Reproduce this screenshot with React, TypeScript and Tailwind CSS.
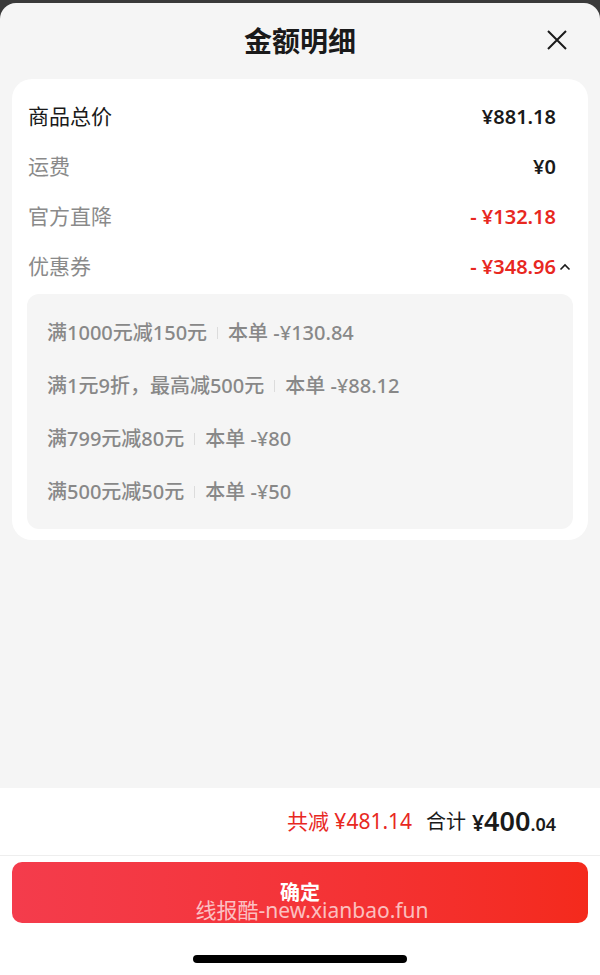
import React from "react";

const font = {
  fontFamily: '"Noto Sans", "Noto Sans CJK SC", sans-serif',
};

const rows = [
  { label: "商品总价", value: "¥881.18", dark: true, red: false },
  { label: "运费", value: "¥0", dark: false, red: false },
  { label: "官方直降", value: "- ¥132.18", dark: false, red: true },
];

const coupons = [
  { rule: "满1000元减150元", amount: "本单 -¥130.84" },
  { rule: "满1元9折，最高减500元", amount: "本单 -¥88.12" },
  { rule: "满799元减80元", amount: "本单 -¥80" },
  { rule: "满500元减50元", amount: "本单 -¥50" },
];

const App = () => {
  return (
    <div className="h-[975px] w-[600px] bg-[#3a3a3a] pt-[3px]" style={font}>
      <div className="flex h-[972px] flex-col overflow-hidden rounded-t-[16px] bg-[#f5f5f5]">
        <div className="relative flex h-[76px] shrink-0 items-center justify-center">
          <h1 className="text-[28px] font-bold text-[#1a1a1a]">金额明细</h1>
          <button className="absolute right-[32px] top-[26px] text-[#1a1a1a]">
            <svg width="22" height="22" viewBox="0 0 22 22" fill="none" stroke="currentColor" strokeWidth="2">
              <path d="M2 2L20 20M20 2L2 20" />
            </svg>
          </button>
        </div>

        <div className="mx-[12px] rounded-[20px] bg-white pb-[11px] pt-[13px]">
          {rows.map((r) => (
            <div key={r.label} className="flex h-[50px] items-center justify-between pl-4 pr-8">
              <span className={`text-[21px] ${r.dark ? "text-[#1a1a1a]" : "text-[#8a8a8a]"}`}>
                {r.label}
              </span>
              <span
                className={`text-[20px] font-semibold ${r.red ? "text-[#e8281f]" : "text-[#1a1a1a]"}`}
              >
                {r.value}
              </span>
            </div>
          ))}
          <div className="flex h-[50px] items-center justify-between pl-4 pr-8">
            <span className="text-[21px] text-[#8a8a8a]">优惠券</span>
            <span className="relative text-[20px] font-semibold text-[#e8281f]">
              - ¥348.96
              <svg
                className="absolute right-[-15px] top-[11px]"
                width="12"
                height="8"
                viewBox="0 0 12 8"
                fill="none"
                stroke="#1a1a1a"
                strokeWidth="1.6"
              >
                <path d="M1.5 6.5L6 2L10.5 6.5" />
              </svg>
            </span>
          </div>

          <div className="mx-[15px] mt-[2px] rounded-[12px] bg-[#f5f5f5] pb-[11px] pl-[20px] pt-[12px]">
            {coupons.map((c) => (
              <div
                key={c.rule}
                className="flex h-[53px] items-center text-[20px] font-medium text-[#888888]"
              >
                <span>{c.rule}</span>
                <span className="mx-[10px] h-[12px] w-px bg-[#dcdcdc]" />
                <span className="whitespace-pre">{c.amount}</span>
              </div>
            ))}
          </div>
        </div>

        <div className="flex-1" />

        <div className="shrink-0 bg-white">
          <div className="flex h-[68px] items-center justify-end border-b border-[#eeeeee] pr-[44px]">
            <span className="text-[21px] text-[#e8281f]">共减 ¥481.14</span>
            <span className="ml-[14px] text-[20px] text-[#1a1a1a]">合计</span>
            <span className="ml-[6px] flex items-baseline text-[#1a1a1a]">
              <span className="text-[21px] font-semibold">¥</span>
              <span className="text-[27px] font-semibold">400</span>
              <span className="text-[18px] font-semibold">.04</span>
            </span>
          </div>
          <div className="px-[12px] pt-[6px]">
            <button className="relative flex h-[61px] w-full items-center justify-center rounded-[10px] bg-gradient-to-r from-[#f43c4c] to-[#f42a1c] leading-none">
              <span className="text-[20px] font-bold text-white">确定</span>
              <span className="absolute left-[24px] right-0 top-[38px] text-center text-[21px] text-white/70">
                线报酷-new.xianbao.fun
              </span>
            </button>
          </div>
          <div className="flex h-[52px] items-center justify-center">
            <div className="mt-[20px] h-[8px] w-[214px] rounded-full bg-black" />
          </div>
        </div>
      </div>
    </div>
  );
};

export default App;
